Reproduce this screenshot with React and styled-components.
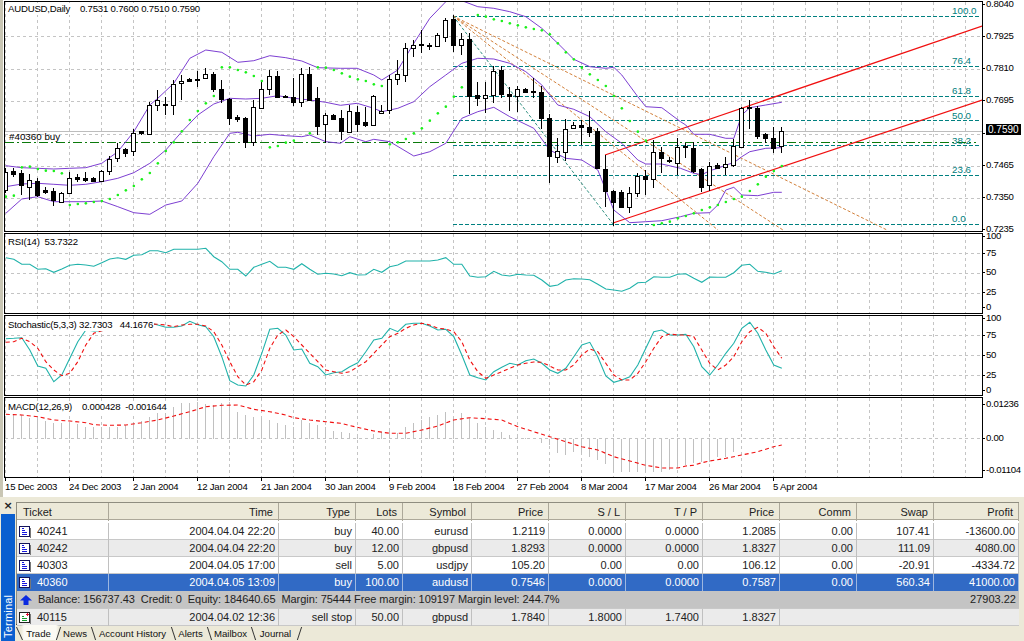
import React from "react";
import styled, { createGlobalStyle } from "styled-components";

//#region Data
const CANDLES = `515,570,505,580,w 512,522,505,530,b 520,555,510,585,b 540,560,522,600,w 544,585,535,590,b 570,575,560,582,b 573,600,565,618,b 580,605,575,607,w
535,578,515,580,w 530,537,522,545,b 535,540,515,545,b 533,542,530,545,b 514,542,510,545,w 477,514,467,525,w 445,475,430,485,w 448,458,445,470,b
400,452,388,467,w 394,398,392,405,b 316,402,305,402,w 300,316,270,332,w 313,316,290,345,b 253,314,240,345,w 244,250,225,300,w 238,242,234,247,b
238,240,212,260,b 221,235,205,238,w 223,266,215,275,b 268,297,240,310,b 296,353,295,375,b 351,356,345,365,b 355,427,350,445,b 322,425,300,437,w
268,323,240,325,w 229,268,210,285,w 229,290,213,295,b 289,292,285,295,b 290,307,235,318,b 223,305,203,320,w 222,300,200,300,b 295,377,260,405,b
346,373,340,430,w 345,356,342,360,b 355,392,330,420,b 332,395,315,400,w 337,372,318,395,b 367,374,320,380,b 289,374,285,378,w 332,340,315,342,w
238,330,225,342,w 223,238,180,255,w 145,224,130,245,w 136,145,120,172,w 133,136,90,160,b 134,137,128,150,b 106,137,100,140,w 61,110,55,125,w
58,134,45,155,b 118,134,100,165,w 118,288,100,342,b 284,295,245,318,b 284,295,245,340,w 213,284,197,308,w 210,282,197,295,b 283,287,262,332,b
268,287,258,335,w 267,275,263,278,b 273,276,235,295,b 277,353,258,388,b 353,467,343,550,b 454,470,415,490,w 388,455,358,482,w 375,384,365,385,w
375,382,360,435,b 381,395,332,410,b 394,503,385,505,b 508,573,465,622,b 574,605,570,678,b 576,620,570,622,b 580,622,562,640,w 527,580,518,592,w
528,538,510,585,b 457,538,420,565,w 457,475,440,520,b 480,482,472,490,b 440,490,415,525,w 438,442,430,475,b 445,512,425,520,b 508,560,505,575,b
498,556,485,572,w 496,503,490,508,b 493,502,470,525,w 438,495,418,500,w 325,440,320,442,w 322,325,300,388,b 325,407,318,417,b 402,415,400,428,b
415,443,380,458,b 392,438,380,458,w`;

const BB_UPPER = [
  [0, "16:497 64:503 112:505 160:507 208:505 256:503 304:490 352:455 400:395 448:315 472:295 520:250 568:175 616:150 664:157 712:187 760:182 808:167 856:173 904:183 952:203 1020:205"],
  [340, "50:205 100:225 124:240 172:210 220:130 268:55 316:5 340:-2 372:5 412:20 460:25 508:35 556:50 604:85 652:130 700:178 748:200 796:205 820:202 844:225 892:290 916:320 964:323 1020:365"],
  [680, "16:375 40:403 88:403 136:415 160:415 184:345 208:323 256:315 304:307"],
];
const BB_MID = [
  [0, "16:560 64:552 112:550 160:553 208:556 256:553 304:545 352:535 400:518 448:490 496:450 544:395 592:345 640:312 688:295 736:297 784:295 832:287 880:295 928:300 976:307 1020:316"],
  [340, "50:310 100:325 124:335 172:325 220:305 268:260 316:225 364:190 412:175 460:177 508:190 556:215 604:255 652:315 700:328 748:350 796:395 844:430 892:480 916:492 964:492 1020:505"],
  [680, "40:520 64:524 88:512 112:505 136:495 160:488 184:470 208:455 256:445 304:443"],
];
const BB_LOWER = [
  [0, "16:640 64:597 112:590 160:605 208:605 256:605 304:603 352:620 400:638 448:643 496:615 544:603 592:550 640:470 688:400 712:397 760:408 808:403 856:407 904:410 928:405 976:425 1020:430"],
  [340, "28:410 76:425 100:418 148:425 220:468 268:455 316:430 364:355 412:335 460:322 508:350 580:385 628:450 676:475 724:480 772:510 820:630 868:668 916:665 964:662 1020:650"],
  [680, "40:640 88:638 112:615 136:570 160:562 184:585 232:587 280:577 304:577"],
];
const SAR = [
  [0, "16:590 40:587 64:502 88:500 112:507 136:512 160:513 184:520 208:615 232:612 256:610 280:606 304:603 328:597 352:585 376:571 400:558 424:538 448:519 472:490 496:453 520:427 544:394 568:360 592:333 616:310 640:288 664:202 688:202 712:210 736:217 760:228 784:243 808:442 832:438 856:428 880:422 928:400 952:202 976:203 1000:210"],
  [340, "4:220 28:230 52:238 76:243 100:253 124:258 148:433 172:427 196:417 220:400 244:385 268:362 292:340 316:320 340:290 364:262 412:45 436:50 460:58 484:63 508:70 532:76 556:82 580:87 604:91 628:103 652:130 676:157 700:178 724:203 748:223 772:240 796:258 820:288 844:325 868:363 892:395 916:422 940:675 964:670 988:665 1012:655"],
  [680, "16:648 40:640 64:630 88:622 112:615 136:606 160:597 184:590 208:573 232:553 256:530 280:513 304:498"],
];
const RSI = [
  [0, "16:83 40:88 64:103 88:103 112:118 136:116 160:127 184:117 208:106 232:103 256:105 280:109 304:98 328:87 352:83 376:88 400:76 424:74 448:62 472:62 496:68 520:58 544:58 568:58 592:58 616:55 640:80 664:95 688:118 712:118 736:138 760:112 784:103 808:94 832:112 856:112 880:118 904:101 928:118 952:133 976:130 1000:132"],
  [340, "4:137 28:128 52:135 76:134 100:118 124:127 148:110 172:105 196:93 220:93 244:93 268:93 292:90 316:83 340:103 364:103 388:138 412:142 436:140 460:124 484:135 508:138 532:133 556:135 580:136 604:150 628:169 652:165 676:150 700:146 724:147 748:149 772:163 796:177 820:180 844:184 868:175 892:158 916:157 940:140 964:142 988:142 1012:133"],
  [680, "16:131 40:145 64:157 88:141 112:142 136:142 160:128 184:106 208:103 232:124 256:127 280:132 304:122"],
];
const STOCH_MAIN = [
  [0, "16:326 40:325 64:323 88:360 112:408 136:415 160:455 184:435 208:385 232:335 256:300 280:303 304:302 328:290 352:285 376:280 400:280 424:278 448:278 472:285 496:292 520:292 544:288 568:274 592:284 616:290 640:320 664:380 688:452 712:465 736:468 760:435 784:370 808:298 832:295 856:315 880:360 904:357 928:400 952:410 976:435 1000:428"],
  [340, "4:425 28:410 52:398 76:365 100:330 124:325 148:295 172:305 196:283 220:280 244:280 268:288 292:300 316:298 340:320 364:375 388:435 412:443 436:450 460:425 484:412 508:400 532:405 556:392 580:387 604:400 628:420 652:430 676:415 700:380 724:345 748:337 772:380 796:438 820:457 844:450 868:440 892:405 916:355 940:305 964:300 988:315 1012:315"],
  [680, "16:313 40:350 64:410 88:435 112:405 136:370 160:340 184:295 208:277 232:310 256:360 280:405 304:415"],
];
const STOCH_SIGNAL = [
  [0, "16:337 40:335 64:325 88:335 112:355 136:395 160:420 184:437 208:430 232:395 256:345 280:310 304:302 328:300 352:290 376:285 400:282 424:282 448:282 472:283 496:285 520:290 544:285 568:283 592:283 616:288 640:305 664:345 688:395 712:440 736:465 760:455 784:420 808:355 832:315 856:300 880:320 904:345 928:370 952:395 976:420 1000:425"],
  [340, "4:430 28:425 52:410 76:395 100:370 124:345 148:320 172:310 196:295 220:285 244:280 268:285 292:295 316:297 340:305 364:335 388:390 412:425 436:445 460:435 484:425 508:415 532:405 556:400 580:396 604:397 628:408 652:420 676:420 700:405 724:375 748:357 772:365 796:400 820:435 844:450 868:450 892:430 916:395 940:355 964:320 988:312 1012:315"],
  [680, "16:315 40:320 64:360 88:400 112:420 136:405 160:380 184:335 208:305 232:292 256:310 280:350 304:385"],
];
const MACD_SIGNAL = [
  [0, "16:553 64:555 112:560 160:570 208:573 256:578 280:584 328:586 376:585 424:578 472:570 520:558 568:545 616:530 664:526 712:525 760:538 808:545 856:555 880:563 928:570 976:575 1020:580"],
  [340, "50:592 100:603 148:610 196:610 244:600 292:588 340:570 388:563 436:566 484:570 532:590 580:605 628:620 676:635 724:650 772:660 820:680 868:693 916:706 964:714 1012:714"],
  [680, "16:708 40:706 64:698 88:693 136:685 184:675 232:665 280:650 304:645"],
];
const MACD_BARS = [565,553,555,565,568,572,578,580,580,583,590,590,590,590,590,585,578,572,560,550,540,530,520,518,515,522,525,520,515,545,555,560,565,570,580,585,590,570,578,585,590,603,
  605,610,620,625,612,605,600,610,590,580,570,560,555,545,560,550,565,580,590,600,605,615,620,625,627,640,645,670,675,665,670,680,690,702,725,725,725,725,725,725,725,720,715,
  705,700,695,695,680,680,665];

const FIB = [
  { y: 16, label: "100.0", labelY: 10 },
  { y: 66, label: "76.4", labelY: 60 },
  { y: 96, label: "61.8", labelY: 90 },
  { y: 120, label: "50.0", labelY: 115 },
  { y: 145, label: "38.2", labelY: 140 },
  { y: 175, label: "23.6", labelY: 169 },
  { y: 224, label: "0.0", labelY: 218 },
];

const PRICES = ["0.8040", "0.7925", "0.7810", "0.7695", "0.7590", "0.7465", "0.7350", "0.7235"];
const DATES = ["15 Dec 2003", "24 Dec 2003", "2 Jan 2004", "12 Jan 2004", "21 Jan 2004", "30 Jan 2004", "9 Feb 2004", "18 Feb 2004", "27 Feb 2004", "8 Mar 2004", "17 Mar 2004", "26 Mar 2004", "5 Apr 2004"];
const COLUMNS = ["Ticket", "Time", "Type", "Lots", "Symbol", "Price", "S / L", "T / P", "Price", "Comm", "Swap", "Profit"];
const ROWS = [
  { tone: "white", cells: ["40241", "2004.04.04 22:20", "buy", "40.00", "eurusd", "1.2119", "0.0000", "0.0000", "1.2085", "0.00", "107.41", "-13600.00"] },
  { tone: "alt", cells: ["40242", "2004.04.04 22:20", "buy", "12.00", "gbpusd", "1.8293", "0.0000", "0.0000", "1.8327", "0.00", "111.09", "4080.00"] },
  { tone: "white", cells: ["40303", "2004.04.05 17:00", "sell", "5.00", "usdjpy", "105.20", "0.00", "0.00", "106.12", "0.00", "-20.91", "-4334.72"] },
  { tone: "selected", cells: ["40360", "2004.04.05 13:09", "buy", "100.00", "audusd", "0.7546", "0.0000", "0.0000", "0.7587", "0.00", "560.34", "41000.00"] },
];
const TABS = [
  { name: "Trade", width: 45, slant: "/", active: true },
  { name: "News", width: 35, slant: "\\" },
  { name: "Account History", width: 80, slant: "\\" },
  { name: "Alerts", width: 36, slant: "\\" },
  { name: "Mailbox", width: 44, slant: "\\" },
  { name: "Journal", width: 46, slant: "/" },
];
const COLUMN_WIDTHS = "92px 170px 77px 47px 69px 77px 77px 77px 77px 77px 77px 1fr";
//#endregion Data

// readings were taken off 3x crops: turn "x:y" pairs into svg points
const series = (parts, shiftY) =>
  parts
    .map(([off, s]) =>
      s
        .split(" ")
        .map((p) => {
          const [a, b] = p.split(":");
          return `${(off + a / 3 - 5 + 0.5).toFixed(1)},${(b / 3 + shiftY).toFixed(1)}`;
        })
        .join(" ")
    )
    .join(" ");

const dots = (parts) =>
  parts.flatMap(([off, s]) =>
    s.split(" ").map((p) => {
      const [a, b] = p.split(":");
      return [off + a / 3 - 5, b / 3 - 2];
    })
  );

const gridX = Array.from({ length: 31 }, (_, i) => 32 * i + 0.5);

//#region Styles
const GlobalStyle = createGlobalStyle`
  html, body {
    margin: 0;
    padding: 0;
    background: #ece9d8;
  }
  #root {
    width: 1024px;
    height: 641px;
    overflow: hidden;
  }
`;
const Page = styled.div`
  width: 1024px;
  height: 641px;
  display: flex;
  flex-direction: column;
  font-family: "Liberation Sans", Arial, sans-serif;
  font-size: 11px;
  color: #000;
`;
const ChartArea = styled.section`
  height: 497px;
  padding: 1px 0 0 1px;
  box-sizing: border-box;
  background: #fff;
  display: flex;
  flex-direction: column;
  gap: 1px;
  border-left: 3px solid #c9c6b4;
`;
const Panel = styled.div`
  height: ${(p) => p.$height}px;
  display: flex;
  position: relative;
`;
const Plot = styled.svg`
  display: block;
  box-sizing: content-box;
  width: 977px;
  height: ${(p) => p.$height - 2}px;
  border: 1px solid #000;
  flex: none;
  overflow: hidden;
  background: #fff;
  font-family: "Liberation Sans", Arial, sans-serif;
  font-size: 9.8px;
`;
const Legend = styled.div`
  position: absolute;
  left: 3px;
  top: ${(p) => p.$top}px;
  background: #fff;
  padding: 0 1px;
  font-size: 9.6px;
  letter-spacing: -0.2px;
  line-height: 12px;
  white-space: pre;
`;
const Scale = styled.div`
  flex: 1;
  display: grid;
  grid-template-rows: ${(p) => p.$rows};
  margin-top: ${(p) => p.$offset}px;
  font-size: 9.6px;
  letter-spacing: -0.3px;
  line-height: 8px;
`;
const ScaleLabel = styled.div`
  display: flex;
  align-items: flex-start;
  gap: 1px;
  white-space: nowrap;

  &::before {
    content: "";
    width: 2px;
    height: 1px;
    margin-top: 4px;
    background: #000;
    flex: none;
  }
`;
const CurrentPrice = styled.span`
  background: #000;
  color: #fff;
  padding: 0 2px;
  line-height: 11px;
  margin-top: -5px;
  font-size: 10px;
  letter-spacing: 0;
`;
const DateAxis = styled.div`
  display: flex;
  margin-top: -1px;
  font-size: 9.6px;
  letter-spacing: -0.2px;
  line-height: 12px;
`;
const DateLabel = styled.div`
  width: 64px;
  flex: none;
  padding: 3px 0 0 1px;
  box-sizing: border-box;
  white-space: nowrap;
  position: relative;

  &::before {
    content: "";
    position: absolute;
    left: 1px;
    top: 0;
    width: 1px;
    height: 3px;
    background: #000;
  }
`;
const Terminal = styled.section`
  flex: 1;
  display: flex;
  background: #ece9d8;
  min-height: 0;
`;
const SideBar = styled.aside`
  width: 14px;
  margin-left: 1px;
  flex: none;
  display: flex;
  flex-direction: column;
`;
const CloseMark = styled.div`
  height: 16px;
  font: bold 11px/15px "DejaVu Sans", sans-serif;
  text-align: center;
  color: #222;
  padding-top: 1px;
`;
const SideTitle = styled.div`
  flex: 1;
  background: #0a5fd0;
  color: #fff;
  display: flex;
  align-items: center;
  justify-content: flex-start;
  writing-mode: vertical-rl;
  transform: rotate(180deg);
  font-size: 11px;
  letter-spacing: 0.2px;
  padding-top: 3px;
  box-sizing: border-box;
`;
const TerminalMain = styled.div`
  margin-left: 1px;
  width: 1003px;
  padding-top: 5px;
  display: flex;
  flex-direction: column;
`;
const Table = styled.div`
  background: #fff;
  border-top: 1px solid #8f8d80;
  border-left: 1px solid #8f8d80;
  border-bottom: 1px solid #000;
  height: 123px;
  box-sizing: border-box;
`;
const Row = styled.div`
  display: grid;
  grid-template-columns: ${COLUMN_WIDTHS};
  height: ${(p) => p.$height || 17}px;
  box-sizing: border-box;
  line-height: 17px;
  background: ${(p) =>
    ({ white: "#fff", alt: "#ebebeb", selected: "#316ac5", balance: "#c4c4c4" }[p.$tone])};
  color: ${(p) => (p.$tone === "selected" ? "#fff" : "#222")};
  border-bottom: 1px solid ${(p) => (p.$tone === "selected" ? "#316ac5" : "#c8c8c8")};
`;
const Head = styled.div`
  display: grid;
  grid-template-columns: ${COLUMN_WIDTHS};
  height: 16px;
  line-height: 18px;
  background: #ece9d8;
  border-bottom: 1px solid #aca899;
  margin-bottom: 3px;
`;
const HeadCell = styled.div`
  padding: 0 5px 0 6px;
  text-align: ${(p) => (p.$left ? "left" : "right")};
  border-right: 1px solid #aca899;
  color: #222;
  white-space: nowrap;
`;
const Cell = styled.div`
  padding: 0 3px;
  text-align: right;
  border-right: 1px solid ${(p) => (p.$selected ? "#9db7e0" : "#c0c0c0")};
  white-space: nowrap;
`;
const TicketCell = styled(Cell)`
  text-align: left;
  display: flex;
  align-items: center;
  gap: 6px;
  padding-left: 2px;
`;
const EmptyCells = styled.div`
  grid-column: 10 / -1;
`;
const BalanceText = styled.div`
  grid-column: 1 / 12;
  display: flex;
  align-items: center;
  gap: 6px;
  padding-left: 3px;
  white-space: pre;
  letter-spacing: -0.06px;
`;
const BalanceProfit = styled.div`
  text-align: right;
  padding-right: 3px;
`;
const TabStrip = styled.div`
  display: flex;
  height: 15px;
`;
const Tab = styled.div`
  width: ${(p) => p.$width}px;
  flex: none;
  box-sizing: border-box;
  padding-right: ${(p) => (p.$active ? 0 : 7)}px;
  position: relative;
  text-align: center;
  line-height: 17px;
  font-size: 9.6px;
  white-space: nowrap;
  color: #111;
  background: ${(p) =>
    p.$active
      ? "linear-gradient(to right, transparent 5px, #fbfaf4 8px, #fbfaf4 calc(100% - 5px), transparent calc(100% - 2px))"
      : "transparent"};

  &::after {
    content: "";
    position: absolute;
    top: 2px;
    bottom: 0;
    right: 2px;
    width: 1px;
    background: #333;
    transform: skewX(${(p) => (p.$slant === "/" ? "-18deg" : "18deg")});
  }
`;
const TradeEdge = styled.div`
  width: 0;
  position: relative;
  z-index: 1;

  &::before {
    content: "";
    position: absolute;
    left: 3px;
    top: 2px;
    height: 13px;
    width: 1px;
    background: #333;
    transform: skewX(25deg);
  }
`;
//#endregion Styles

const CANDLE_LIST = CANDLES.trim().split(/\s+/).map((c) => c.split(","));

function GridLines({ height, rows }) {
  return (
    <g stroke="#c4c4c4" strokeDasharray="3 3" shapeRendering="crispEdges">
      {gridX.map((x) => (
        <line key={x} x1={x} x2={x} y1={0} y2={height} />
      ))}
      {rows.map((y) => (
        <line key={y} x1={0} x2={977} y1={y + 0.5} y2={y + 0.5} />
      ))}
    </g>
  );
}

function PriceChart() {
  const apex = [448, 14];
  return (
    <Plot $height={231} viewBox="0 0 977 229">
      <GridLines height={229} rows={[34, 67, 99, 132, 164, 196]} />
      <line x1={0} x2={977} y1={129} y2={129} stroke="#bdbdbd" shapeRendering="crispEdges" />
      <line x1={0} x2={971} y1={140.5} y2={140.5} stroke="#0b7a0b" strokeDasharray="9 3 2 3" shapeRendering="crispEdges" />
      {FIB.map((f) => (
        <g key={f.label}>
          <line x1={448} x2={976} y1={f.y - 1.5} y2={f.y - 1.5} stroke="#008080" strokeDasharray="4 2" shapeRendering="crispEdges" />
          <text x={947} y={f.labelY + 2} fill="#008080">{f.label}</text>
        </g>
      ))}
      {[[882, 228], [778, 228], [713, 228]].map(([x, y]) => (
        <line key={x} x1={apex[0]} y1={apex[1]} x2={x} y2={y} stroke="#d2803a" strokeDasharray="3 2" />
      ))}
      <line x1={apex[0]} y1={apex[1]} x2={608} y2={222} stroke="#2f8f80" strokeDasharray="3 2" />
      <line x1={608} y1={221} x2={977} y2={98} stroke="#f01010" strokeWidth="1.3" />
      <line x1={600} y1={153} x2={977} y2={24} stroke="#f01010" strokeWidth="1.3" />
      {[BB_UPPER, BB_MID, BB_LOWER].map((b, i) => (
        <polyline key={i} points={series(b, -2)} fill="none" stroke="#7d3fd2" strokeWidth="1" />
      ))}
      <g shapeRendering="crispEdges">
        {CANDLE_LIST.map(([top, bottom, high, low, kind], i) => {
          const x = 8 * i;
          const bodyTop = Math.round(top / 3) - 2;
          const bodyH = Math.max(Math.round(bottom / 3) - 2 - bodyTop, 1);
          return (
            <g key={i}>
              <line x1={x + 0.5} x2={x + 0.5} y1={high / 3 - 2} y2={low / 3 - 2} stroke="#000" />
              <rect x={x - 2 + 0.5} y={bodyTop + 0.5} width={4} height={bodyH} fill={kind === "b" ? "#000" : "#fff"} stroke="#000" />
            </g>
          );
        })}
      </g>
      {dots(SAR).map(([x, y], i) => (
        <circle key={i} cx={x + 0.5} cy={y} r="1.3" fill="#1cf01c" />
      ))}
      <text x={4} y={138}>#40360 buy</text>
    </Plot>
  );
}

function RsiChart() {
  return (
    <Plot $height={81} viewBox="0 0 977 79">
      <GridLines height={79} rows={[19, 39, 59]} />
      <polyline points={series(RSI, -4)} fill="none" stroke="#20b2aa" strokeWidth="1.1" />
    </Plot>
  );
}

function StochChart() {
  return (
    <Plot $height={81} viewBox="0 0 977 79">
      <GridLines height={79} rows={[19, 39, 59]} />
      <polyline points={series(STOCH_MAIN, -86)} fill="none" stroke="#20b2aa" strokeWidth="1.1" />
      <polyline points={series(STOCH_SIGNAL, -86)} fill="none" stroke="#f01010" strokeWidth="1.1" strokeDasharray="4 3" />
    </Plot>
  );
}

function MacdChart() {
  const zero = 41;
  return (
    <Plot $height={81} viewBox="0 0 977 79">
      <GridLines height={79} rows={[zero - 1]} />
      <g stroke="#c0c0c0" shapeRendering="crispEdges">
        {MACD_BARS.map((v, i) => (
          <line key={i} x1={8 * i + 0.5} x2={8 * i + 0.5} y1={zero} y2={v / 3 - 168} />
        ))}
      </g>
      <polyline points={series(MACD_SIGNAL, -168)} fill="none" stroke="#f01010" strokeWidth="1.1" strokeDasharray="4 3" />
    </Plot>
  );
}

function DocIcon({ pending }) {
  return (
    <svg width="12" height="12" viewBox="0 0 12 12" shapeRendering="crispEdges" style={{ flex: "none" }}>
      <path d="M11.5 2v10H2" fill="none" stroke="#777" />
      <rect x="0.5" y="0.5" width="10" height="10" fill="#fff" stroke={pending ? "#222" : "#14145a"} />
      <path d={pending ? "M3 4.5h2M3 6.5h5M3 8.5h5" : "M3 2.5h2M3 4.5h3M3 6.5h5M3 8.5h5"} stroke={pending ? "#119a2a" : "#1414e0"} />
      {pending && <path d="M8.5 1v3M7 2.5h3" stroke="#e01030" />}
    </svg>
  );
}

function UpArrow() {
  return (
    <svg width="12" height="10" viewBox="0 0 12 10" style={{ flex: "none" }}>
      <path d="M6 0L12 5.5H8.5V10H3.5V5.5H0Z" fill="#0a2ae0" />
    </svg>
  );
}

function TradeRow({ row }) {
  const selected = row.tone === "selected";
  return (
    <Row $tone={row.tone}>
      <TicketCell $selected={selected}>
        <DocIcon />
        {row.cells[0]}
      </TicketCell>
      {row.cells.slice(1).map((c, i) => (
        <Cell key={i} $selected={selected}>{c}</Cell>
      ))}
    </Row>
  );
}

export default function App() {
  return (
    <>
      <GlobalStyle />
      <Page>
        <ChartArea>
          <Panel $height={231}>
            <PriceChart />
            <Legend $top={2}>
              AUDUSD,Daily{"    "}0.7531 0.7600 0.7510 0.7590
            </Legend>
            <Scale $rows="32.15px 32.15px 32.15px 32.15px 32.15px 32.15px 32.15px 10px" $offset={-1}>
              {PRICES.map((p) =>
                p === "0.7590" ? (
                  <ScaleLabel key={p}><CurrentPrice>{p}</CurrentPrice></ScaleLabel>
                ) : (
                  <ScaleLabel key={p}>{p}</ScaleLabel>
                )
              )}
            </Scale>
          </Panel>
          <Panel $height={81}>
            <RsiChart />
            <Legend $top={3}>
              RSI(14){"  "}53.7322
            </Legend>
            <Scale $rows="17px 19px 20px 15px 10px" $offset={-1}>
              {["100", "75", "50", "25", "0"].map((t) => <ScaleLabel key={t}>{t}</ScaleLabel>)}
            </Scale>
          </Panel>
          <Panel $height={81}>
            <StochChart />
            <Legend $top={4}>
              Stochastic(5,3,3) 32.7303{"   "}44.1676
            </Legend>
            <Scale $rows="17px 20px 20px 15px 9px" $offset={-1}>
              {["100", "75", "50", "25", "0"].map((t) => <ScaleLabel key={t}>{t}</ScaleLabel>)}
            </Scale>
          </Panel>
          <Panel $height={81}>
            <MacdChart />
            <Legend $top={4}>
              MACD(12,26,9){"    "}0.000428{"  "}-0.001644
            </Legend>
            <Scale $rows="34px 32px 12px" $offset={3}>
              {["0.01236", "0.00", "-0.01104"].map((t) => <ScaleLabel key={t}>{t}</ScaleLabel>)}
            </Scale>
          </Panel>
          <DateAxis>
            {DATES.map((d) => <DateLabel key={d}>{d}</DateLabel>)}
          </DateAxis>
        </ChartArea>
        <Terminal>
          <SideBar>
            <CloseMark>×</CloseMark>
            <SideTitle>Terminal</SideTitle>
          </SideBar>
          <TerminalMain>
            <Table>
              <Head>
                {COLUMNS.map((c, i) => <HeadCell key={i} $left={i === 0}>{c}</HeadCell>)}
              </Head>
              {ROWS.map((r) => <TradeRow key={r.cells[0]} row={r} />)}
              <Row $tone="balance" $height={18}>
                <BalanceText>
                  <UpArrow />
                  Balance: 156737.43  Credit: 0  Equity: 184640.65  Margin: 75444 Free margin: 109197 Margin level: 244.7%
                </BalanceText>
                <BalanceProfit>27903.22</BalanceProfit>
              </Row>
              <Row $tone="alt">
                <TicketCell><DocIcon pending />40115</TicketCell>
                {["2004.04.02 12:36", "sell stop", "50.00", "gbpusd", "1.7840", "1.8000", "1.7400", "1.8327"].map((c, i) => (
                  <Cell key={i}>{c}</Cell>
                ))}
                <EmptyCells />
              </Row>
            </Table>
            <TabStrip>
              <TradeEdge />
              {TABS.map((t) => (
                <Tab key={t.name} $width={t.width} $slant={t.slant} $active={t.active}>{t.name}</Tab>
              ))}
            </TabStrip>
          </TerminalMain>
        </Terminal>
      </Page>
    </>
  );
}
